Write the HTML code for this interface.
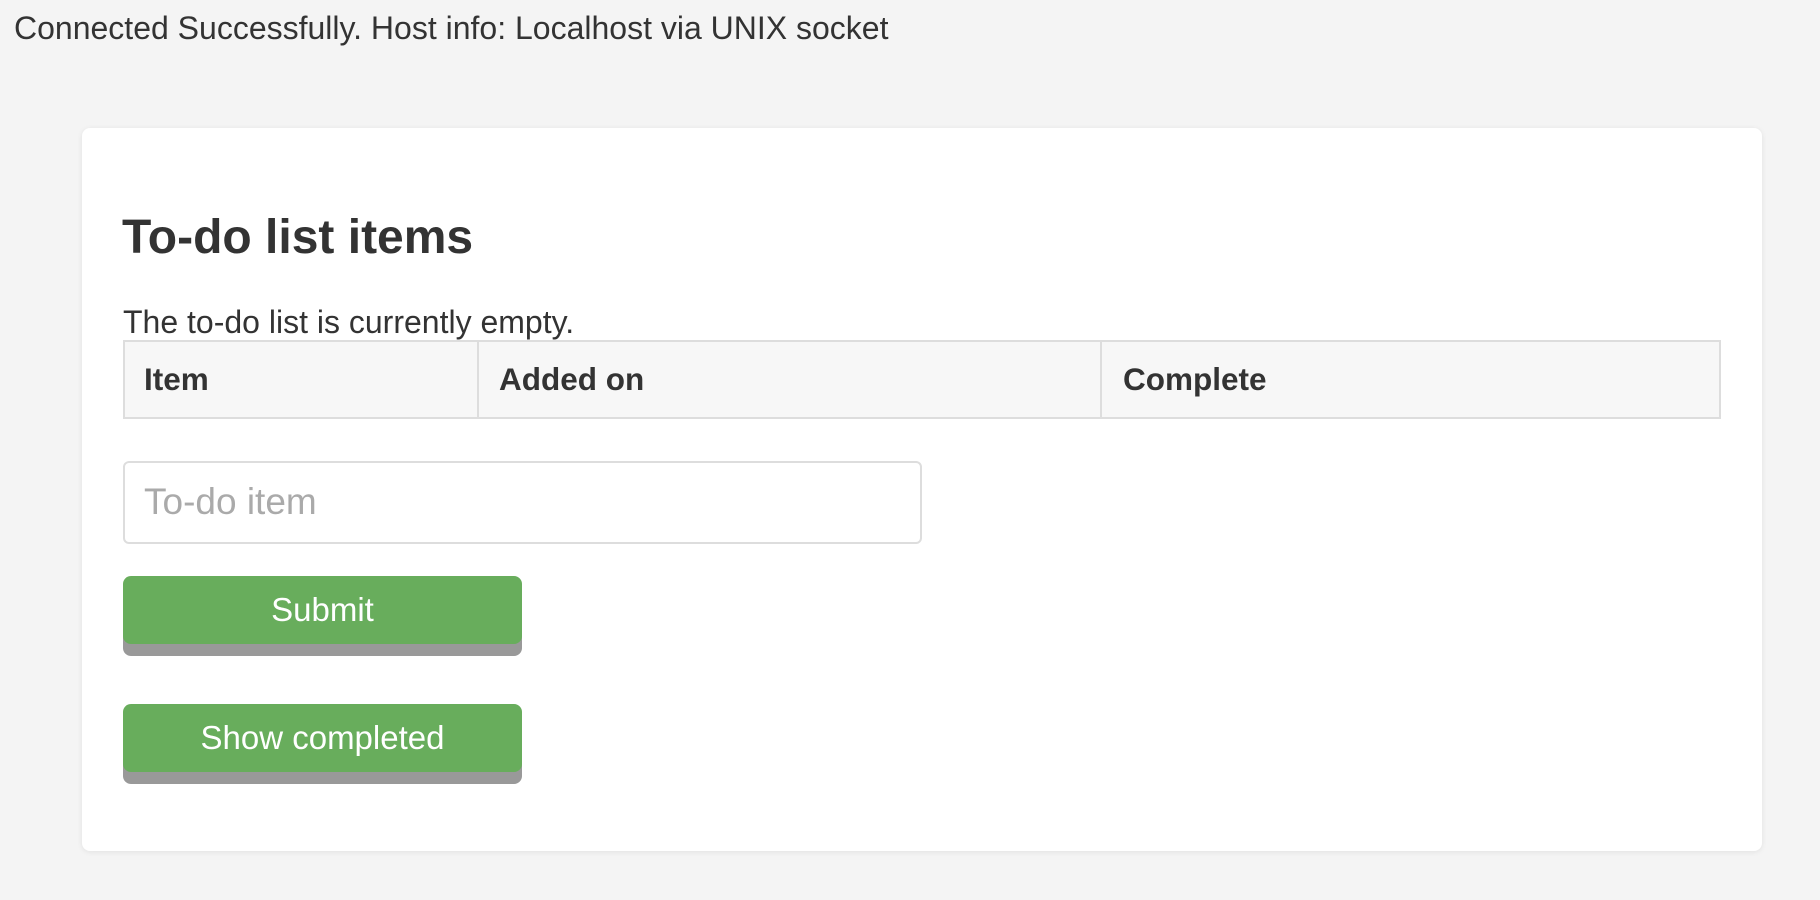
<!DOCTYPE html>
<html><head><meta charset="utf-8"><style>
html,body{margin:0;padding:0;width:1820px;height:900px;background:#f4f4f4;overflow:hidden;font-family:"Liberation Sans",Arial,sans-serif;color:#333;}
.a{position:absolute;white-space:nowrap;line-height:normal;}
.card{position:absolute;left:82px;top:128px;width:1680px;height:723px;background:#fff;border-radius:8px;box-shadow:0 1px 6px rgba(0,0,0,0.08);}
.tbl{position:absolute;left:123px;top:340px;width:1594px;height:75px;background:#f7f7f7;border:2px solid #ddd;}
.vl{position:absolute;top:340px;width:2px;height:79px;background:#ddd;}
.inp{position:absolute;left:123px;top:461px;width:795px;height:79px;border:2px solid #ddd;border-radius:6px;background:#fff;}
.btn{position:absolute;left:123px;width:399px;height:68px;background:#68ad5c;border-radius:8px;box-shadow:0 12px 0 #999;}
.bt{position:absolute;left:123px;width:399px;text-align:center;color:#fff;font-size:33px;line-height:normal;}
</style></head><body>
<div class="a" style="left:14px;top:10px;font-size:32px;">Connected Successfully. Host info: Localhost via UNIX socket</div>
<div class="card"></div>
<div class="a" style="left:122px;top:210px;font-size:48px;font-weight:bold;">To-do list items</div>
<div class="a" style="left:123px;top:304px;font-size:32px;">The to-do list is currently empty.</div>
<div class="tbl"></div>
<div class="vl" style="left:477px"></div>
<div class="vl" style="left:1100px"></div>
<div class="a" style="left:144px;top:361px;font-size:31.5px;font-weight:bold;">Item</div>
<div class="a" style="left:499px;top:361px;font-size:31.5px;font-weight:bold;">Added on</div>
<div class="a" style="left:1123px;top:361px;font-size:31.5px;font-weight:bold;">Complete</div>
<div class="inp"></div>
<div class="a" style="left:144px;top:481px;font-size:37px;color:#aaa;">To-do item</div>
<div class="btn" style="top:576px"></div>
<div class="bt" style="top:591px">Submit</div>
<div class="btn" style="top:704px"></div>
<div class="bt" style="top:719px">Show completed</div>
</body></html>
